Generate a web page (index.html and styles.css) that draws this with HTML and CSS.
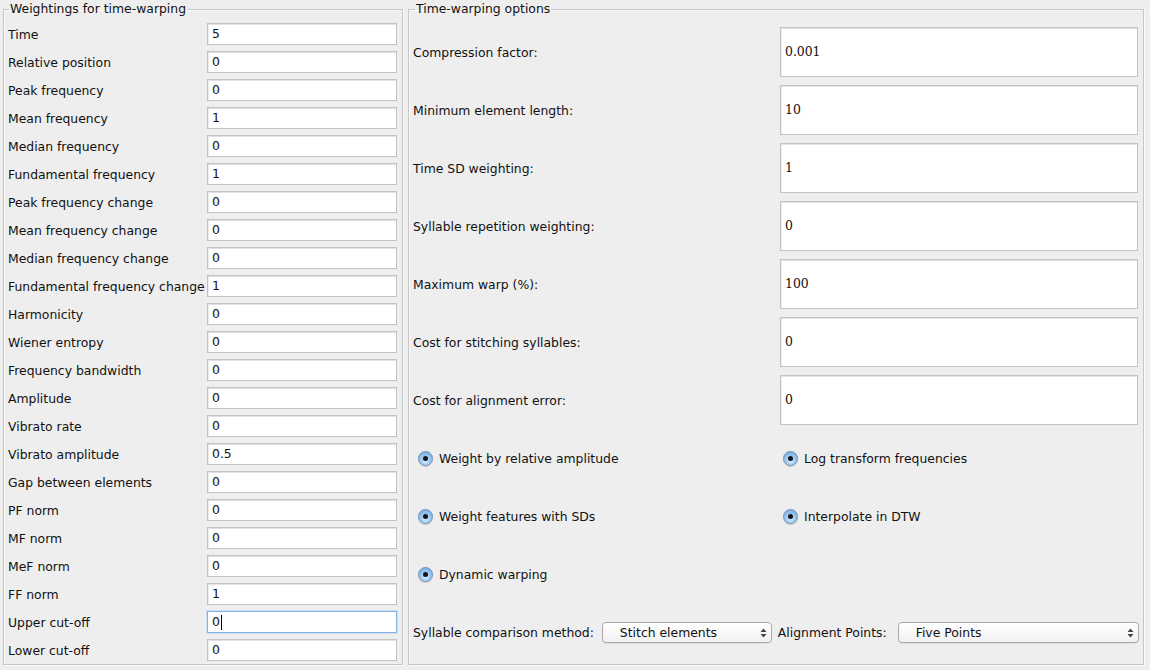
FILE: index.html
```html
<!DOCTYPE html>
<html>
<head>
<meta charset="utf-8">
<link rel="stylesheet" href="styles.css">
</head>
<body>
<div class="app">
  <fieldset class="panel panel-left">
    <legend>Weightings for time-warping</legend>
    <div class="weights">
      <span class="lbl">Time</span><div class="field">5</div>
      <span class="lbl">Relative position</span><div class="field">0</div>
      <span class="lbl">Peak frequency</span><div class="field">0</div>
      <span class="lbl">Mean frequency</span><div class="field">1</div>
      <span class="lbl">Median frequency</span><div class="field">0</div>
      <span class="lbl">Fundamental frequency</span><div class="field">1</div>
      <span class="lbl">Peak frequency change</span><div class="field">0</div>
      <span class="lbl">Mean frequency change</span><div class="field">0</div>
      <span class="lbl">Median frequency change</span><div class="field">0</div>
      <span class="lbl">Fundamental frequency change</span><div class="field">1</div>
      <span class="lbl">Harmonicity</span><div class="field">0</div>
      <span class="lbl">Wiener entropy</span><div class="field">0</div>
      <span class="lbl">Frequency bandwidth</span><div class="field">0</div>
      <span class="lbl">Amplitude</span><div class="field">0</div>
      <span class="lbl">Vibrato rate</span><div class="field">0</div>
      <span class="lbl">Vibrato amplitude</span><div class="field">0.5</div>
      <span class="lbl">Gap between elements</span><div class="field">0</div>
      <span class="lbl">PF norm</span><div class="field">0</div>
      <span class="lbl">MF norm</span><div class="field">0</div>
      <span class="lbl">MeF norm</span><div class="field">0</div>
      <span class="lbl">FF norm</span><div class="field">1</div>
      <span class="lbl">Upper cut-off</span><div class="field focused">0<span class="caret"></span></div>
      <span class="lbl">Lower cut-off</span><div class="field">0</div>
    </div>
  </fieldset>
  <fieldset class="panel panel-right">
    <legend>Time-warping options</legend>
    <div class="options">
      <span class="lbl">Compression factor:</span><div class="field big">0.001</div>
      <span class="lbl">Minimum element length:</span><div class="field big">10</div>
      <span class="lbl">Time SD weighting:</span><div class="field big">1</div>
      <span class="lbl">Syllable repetition weighting:</span><div class="field big">0</div>
      <span class="lbl">Maximum warp (%):</span><div class="field big">100</div>
      <span class="lbl">Cost for stitching syllables:</span><div class="field big">0</div>
      <span class="lbl">Cost for alignment error:</span><div class="field big">0</div>

      <label class="radio col1"><span class="dot"></span>Weight by relative amplitude</label>
      <label class="radio col2"><span class="dot"></span>Log transform frequencies</label>
      <label class="radio col1"><span class="dot"></span>Weight features with SDs</label>
      <label class="radio col2"><span class="dot"></span>Interpolate in DTW</label>
      <label class="radio col1"><span class="dot"></span>Dynamic warping</label>
      <span></span>
    </div>
    <div class="bottom">
      <span class="lbl">Syllable comparison method:</span>
      <div class="select sel1">Stitch elements<span class="arrows"><svg width="7" height="10" viewBox="0 0 7 10"><path d="M3.5 0.5 L6.5 4 H0.5 Z M3.5 9.5 L6.5 6 H0.5 Z" fill="#444"/></svg></span></div>
      <span class="lbl">Alignment Points:</span>
      <div class="select sel2">Five Points<span class="arrows"><svg width="7" height="10" viewBox="0 0 7 10"><path d="M3.5 0.5 L6.5 4 H0.5 Z M3.5 9.5 L6.5 6 H0.5 Z" fill="#444"/></svg></span></div>
    </div>
  </fieldset>
</div>
</body>
</html>
```
FILE: styles.css
```css
html, body {
  margin: 0;
  padding: 0;
  background: #eeeeee;
}
body {
  font-family: "DejaVu Sans", "Lucida Grande", sans-serif;
  font-size: 12.4px;
  color: #111;
  width: 1150px;
  height: 670px;
  overflow: hidden;
}
.app {
  display: flex;
  gap: 5px;
  padding: 1px 6px 0 3px;
  height: 665px;
  box-sizing: border-box;
}
.panel {
  margin: 0;
  border: 1px solid #c6c6c6;
  box-shadow: inset 1px 1px 0 #fafafa, 1px 1px 0 #fafafa;
  box-sizing: border-box;
  height: 664px;
  min-width: 0;
}
.panel legend {
  padding: 0 1px;
  line-height: 16px;
  font-size: 12.4px;
}
.panel-left {
  width: 400px;
  padding: 0 5px 0 4px;
}
.panel-left legend { margin-left: 1px; }
.panel-right legend { margin-left: 3px; }
.panel-right {
  flex: 1;
  padding: 0 5px 0 3px;
  display: flex;
  flex-direction: column;
}
.lbl { white-space: nowrap; }
.weights {
  display: grid;
  grid-template-columns: 199px 190px;
  grid-auto-rows: 28px;
  align-items: center;
  padding-top: 3px;
}
.field {
  height: 22px;
  box-sizing: border-box;
  background: #fff;
  border: 1px solid #c3c3c3;
  box-shadow: inset 0 1px 0 #e2e2e2, inset 1px 0 0 #ececec;
  padding: 0 4px;
  line-height: 20px;
  display: flex;
  align-items: center;
}
.field.focused {
  border: 1px solid #86b1e4;
  box-shadow: 0 0 0 1px #cfe0f4;
}
.caret {
  display: inline-block;
  width: 1px;
  height: 15px;
  background: #000;
  margin-left: 1px;
}
.options {
  display: grid;
  grid-template-columns: 368px 358px;
  grid-auto-rows: 58px;
  align-items: center;
  padding-top: 6px;
}
.options .lbl {
  padding-left: 1px;
}
.field.big {
  height: 50px;
  font-family: "DejaVu Serif", serif;
  font-size: 12.4px;
  padding-left: 4px;
}
.radio {
  display: flex;
  align-items: center;
  gap: 6px;
  white-space: nowrap;
}
.radio.col1 { padding-left: 6px; }
.radio.col2 { padding-left: 3px; }
.dot {
  width: 13px;
  height: 13px;
  border-radius: 50%;
  border: 1px solid #6d8fb8;
  background: radial-gradient(circle at 50% 70%, #d6ecff 0%, #9cc7f0 45%, #6aa2dc 100%);
  box-shadow: 0 1px 1px rgba(0,0,0,0.15);
  position: relative;
  flex: none;
}
.dot::after {
  content: "";
  position: absolute;
  left: 4px;
  top: 4px;
  width: 5px;
  height: 5px;
  border-radius: 50%;
  background: #151515;
}
.bottom {
  display: flex;
  align-items: center;
  height: 58px;
  padding-left: 1px;
}
.bottom .lbl { flex: none; }
.select {
  flex: none;
  height: 21px;
  box-sizing: border-box;
  border: 1px solid #a9a9a9;
  border-radius: 4px;
  background: linear-gradient(#ffffff, #f1f1f1);
  box-shadow: 0 1px 0 rgba(0,0,0,0.06);
  display: flex;
  align-items: center;
  padding-left: 17px;
  position: relative;
  white-space: nowrap;
}
.sel1 { width: 170px; margin-left: 8px; margin-right: 6px; }
.sel2 { width: 241px; margin-left: 11px; }
.arrows {
  position: absolute;
  right: 4px;
  top: 5px;
  display: flex;
}
```
